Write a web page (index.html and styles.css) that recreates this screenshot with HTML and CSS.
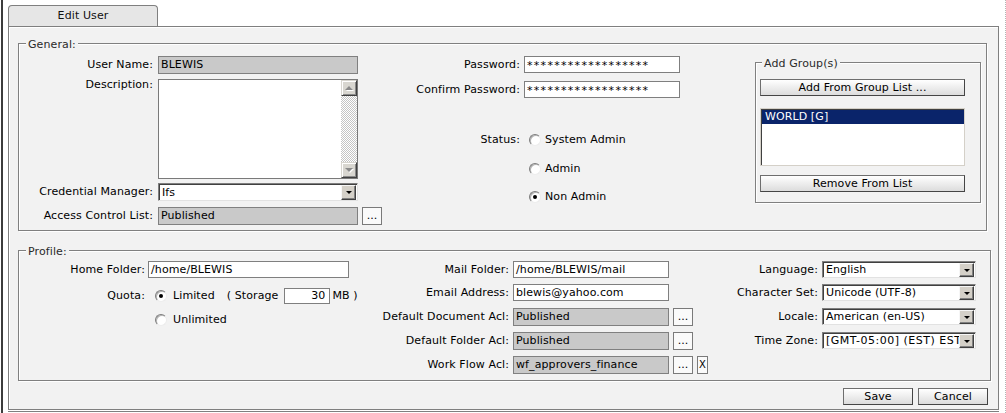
FILE: index.html
```html
<!DOCTYPE html>
<html lang="en">
<head>
<meta charset="utf-8">
<title>Edit User</title>
<link rel="stylesheet" href="styles.css">
</head>
<body>
<div class="frame">
  <div class="tab">Edit User</div>
  <div class="panel">
    <div class="group general">
      <span class="legend">General:</span>
      <div class="col gen-left">
        <div class="row h18 mt12"><span class="lbl">User Name:</span><div class="field ro w200">BLEWIS</div></div>
        <div class="row top mt5"><span class="lbl lbl-top">Description:</span>
          <div class="textarea">
            <div class="ta-body"></div>
            <div class="vscroll"><span class="sbtn"><i class="tri-up"></i></span><span class="track"></span><span class="sbtn"><i class="tri-down"></i></span></div>
          </div>
        </div>
        <div class="row h18 mt4"><span class="lbl">Credential Manager:</span><div class="select w200 sel18"><span class="sel-text">Ifs</span><span class="drop"><i></i></span></div></div>
        <div class="row h18 mt6"><span class="lbl">Access Control List:</span><div class="field ro w200">Published</div><button type="button" class="dots">...</button></div>
      </div>
      <div class="col gen-mid">
        <div class="row h17 mt12"><span class="lbl">Password:</span><div class="field w156 pw">******************</div></div>
        <div class="row h17 mt8"><span class="lbl">Confirm Password:</span><div class="field w156 pw">******************</div></div>
        <div class="row h17 mt33"><span class="lbl">Status:</span><span class="radio st-radio"></span><span class="opt">System Admin</span></div>
        <div class="row h17 mt12"><span class="lbl"></span><span class="radio st-radio"></span><span class="opt">Admin</span></div>
        <div class="row h17 mt11"><span class="lbl"></span><span class="radio on st-radio"></span><span class="opt">Non Admin</span></div>
      </div>
      <div class="group addgroup">
        <span class="legend lg-add">Add Group(s)</span>
        <button type="button" class="btn btn-wide">Add From Group List ...</button>
        <div class="listbox"><div class="list-item sel">WORLD [G]</div></div>
        <button type="button" class="btn btn-wide remove">Remove From List</button>
      </div>
    </div>

    <div class="group profile">
      <span class="legend">Profile:</span>
      <div class="col pro-left">
        <div class="row h17 mt10"><span class="lbl">Home Folder:</span><div class="field w201">/home/BLEWIS</div></div>
        <div class="row h17 mt9"><span class="lbl">Quota:</span><span class="radio on q-radio"></span><span class="q-opt">Limited</span><span class="q-storage">( Storage</span><div class="field num">30</div><span class="q-mb">MB )</span></div>
        <div class="row h17 mt7"><span class="lbl"></span><span class="radio q-radio"></span><span class="q-opt">Unlimited</span></div>
      </div>
      <div class="col pro-mid">
        <div class="row h17 mt10"><span class="lbl">Mail Folder:</span><div class="field w156">/home/BLEWIS/mail</div></div>
        <div class="row h17 mt6"><span class="lbl">Email Address:</span><div class="field w156">blewis@yahoo.com</div></div>
        <div class="row h18 mt7"><span class="lbl">Default Document Acl:</span><div class="field ro w156">Published</div><button type="button" class="dots">...</button></div>
        <div class="row h18 mt6"><span class="lbl">Default Folder Acl:</span><div class="field ro w156">Published</div><button type="button" class="dots">...</button></div>
        <div class="row h18 mt6"><span class="lbl">Work Flow Acl:</span><div class="field ro w156">wf_approvers_finance</div><button type="button" class="dots">...</button><button type="button" class="xbtn">X</button></div>
      </div>
      <div class="col pro-right">
        <div class="row h17 mt10"><span class="lbl">Language:</span><div class="select w154"><span class="sel-text">English</span><span class="drop"><i></i></span></div></div>
        <div class="row h17 mt6"><span class="lbl">Character Set:</span><div class="select w154"><span class="sel-text">Unicode (UTF-8)</span><span class="drop"><i></i></span></div></div>
        <div class="row h17 mt7"><span class="lbl">Locale:</span><div class="select w154"><span class="sel-text">American (en-US)</span><span class="drop"><i></i></span></div></div>
        <div class="row h17 mt7"><span class="lbl">Time Zone:</span><div class="select w154"><span class="sel-text tz">[GMT-05:00] (EST) EST</span><span class="drop"><i></i></span></div></div>
      </div>
    </div>

    <div class="actions">
      <button type="button" class="btn act">Save</button>
      <button type="button" class="btn act">Cancel</button>
    </div>
  </div>
  <div class="panel-foot"></div>
</div>
</body>
</html>
```

FILE: styles.css
```css
* { box-sizing: border-box; }
html, body { margin: 0; padding: 0; background: #fff; }
body {
  font-family: "DejaVu Sans", Verdana, sans-serif;
  font-size: 11px;
  letter-spacing: 0.1px;
  color: #000;
  width: 1006px;
  height: 413px;
  overflow: hidden;
}
button { font-family: "DejaVu Sans", Verdana, sans-serif; font-size: 11px; letter-spacing: 0.1px; color: #000; margin: 0; }

.frame {
  margin-left: 1px;
  width: 1005px;
  height: 413px;
  border-left: 2px solid #3c3c3c;
  border-right: 1px dotted #b4b4b4;
  padding: 5px 0 0 5px;
}

.tab {
  width: 150px;
  height: 21px;
  border: 1px solid #7f7f7f;
  border-bottom: 0;
  border-radius: 4px 4px 0 0;
  background: #e6e6e6;
  text-align: center;
  line-height: 20px;
  color: #111;
}

.panel {
  width: 991px;
  height: 384px;
  border: 1px solid #7f7f7f;
  background: #f2f2f2;
  box-shadow: inset 1px 1px 0 #fff;
  padding: 16px 0 0 9px;
}
.panel-foot { width: 991px; margin-top: 1px; border-top: 1px solid #7f7f7f; }

.group {
  position: relative;
  border: 1px solid #808080;
  box-shadow: inset 1px 1px 0 #fff, 1px 1px 0 #fff;
}
.legend {
  position: absolute;
  top: -6px;
  left: 7px;
  padding: 0 2px;
  background: #f2f2f2;
  line-height: 13px;
  color: #2a2a2a;
  white-space: nowrap;
}
.lg-add { left: 6px; }

.general { display: flex; width: 969px; height: 188px; }
.profile { display: flex; width: 973px; height: 131px; margin-top: 19px; }

.col { display: flex; flex-direction: column; flex: none; }
.gen-left { width: 364px; }
.gen-mid { width: 297px; }
.pro-left { width: 351px; }
.pro-mid { width: 342px; }
.pro-right { width: 260px; }

.row { display: flex; align-items: center; flex: none; }
.row.top { align-items: flex-start; }
.h17 { height: 17px; line-height: 17px; }
.h18 { height: 18px; line-height: 18px; }
.mt4 { margin-top: 4px; }
.mt5 { margin-top: 5px; }
.mt6 { margin-top: 6px; }
.mt7 { margin-top: 7px; }
.mt8 { margin-top: 8px; }
.mt9 { margin-top: 9px; }
.mt10 { margin-top: 10px; }
.mt11 { margin-top: 11px; }
.mt12 { margin-top: 12px; }
.mt33 { margin-top: 33px; }

.lbl { flex: none; text-align: right; white-space: nowrap; }
.lbl-top { line-height: 12px; }
.gen-left .lbl { width: 134px; margin-right: 5px; }
.gen-mid .lbl { width: 137px; margin-right: 4px; }
.pro-left .lbl { width: 126px; margin-right: 3px; }
.pro-mid .lbl { width: 139px; margin-right: 4px; }
.pro-right .lbl { width: 106px; margin-right: 4px; }

.field {
  flex: none;
  height: 17px;
  border: 1px solid #7f7f7f;
  background: #fff;
  padding: 0 2px;
  line-height: 15px;
  white-space: nowrap;
  overflow: hidden;
}
.field.ro { height: 18px; line-height: 16px; background: #c9c9c9; border-color: #808080; }
.w200 { width: 200px; }
.w201 { width: 201px; }
.w156 { width: 156px; }
.w154 { width: 154px; }
.pw { letter-spacing: 1.3px; line-height: 17px; }

.textarea {
  display: flex;
  flex: none;
  width: 200px;
  height: 100px;
  border: 1px solid #7a7a7a;
  background: #fff;
}
.ta-body { flex: 1; }
.vscroll { width: 16px; display: flex; flex-direction: column; }
.sbtn {
  flex: none;
  height: 16px;
  background: #d8d6d0;
  border: 1px solid;
  border-color: #d8d6d0 #404040 #404040 #d8d6d0;
  box-shadow: inset 1px 1px 0 #fff, inset -1px -1px 0 #8a8a8a;
  display: flex;
  align-items: center;
  justify-content: center;
}
.track {
  flex: 1;
  background: repeating-conic-gradient(#c4c4c4 0 25%, #fff 0 50%) 0 0 / 2px 2px;
}
.tri-up, .tri-down {
  width: 0; height: 0;
  border-left: 4px solid transparent;
  border-right: 4px solid transparent;
  filter: drop-shadow(1px 1px 0 #fff);
}
.tri-up { border-bottom: 4px solid #8a8a8a; }
.tri-down { border-top: 4px solid #8a8a8a; }

.select {
  flex: none;
  display: flex;
  height: 17px;
  border: 1px solid;
  border-color: #7f7f7f #e2e2e2 #e2e2e2 #7f7f7f;
  box-shadow: inset 1px 1px 0 #404040;
  background: #fff;
  padding: 1px 1px 0 1px;
}
.select.sel18 { height: 18px; }
.sel-text { flex: 1; min-width: 0; overflow: hidden; white-space: nowrap; padding-left: 2px; line-height: 14px; }
.sel18 .sel-text { line-height: 15px; }
.tz { letter-spacing: 0.5px; }
.drop {
  flex: none;
  width: 15px;
  background: #d4d0c8;
  border: 1px solid;
  border-color: #f6f6f6 #404040 #404040 #f6f6f6;
  box-shadow: inset -1px -1px 0 #808080;
  display: flex;
  align-items: center;
  justify-content: center;
}
.drop i {
  width: 0; height: 0;
  border-left: 3px solid transparent;
  border-right: 3px solid transparent;
  border-top: 3px solid #000;
}

.dots {
  flex: none;
  width: 20px;
  height: 18px;
  margin-left: 4px;
  padding: 0;
  border: 1px solid #7a7a7a;
  background: #fafafa;
  line-height: 16px;
  text-align: center;
  letter-spacing: 0;
}
.xbtn {
  flex: none;
  width: 11px;
  height: 18px;
  margin-left: 4px;
  padding: 0;
  border: 1px solid #7a7a7a;
  background: #fafafa;
  font-size: 10px;
  line-height: 16px;
  text-align: center;
  letter-spacing: 0;
}

.radio {
  flex: none;
  position: relative;
  width: 12px;
  height: 12px;
  border-radius: 50%;
  border: 1px solid;
  border-color: #7c7c7c #ececec #ececec #7c7c7c;
  background: #fff;
  box-shadow: inset 1px 1px 0 #b4b4b4;
}
.radio.on::after {
  content: "";
  position: absolute;
  left: 3px; top: 3px;
  width: 4px; height: 4px;
  border-radius: 50%;
  background: #000;
}
.st-radio { margin-left: 5px; }
.opt { margin-left: 4px; white-space: nowrap; }
.q-radio { margin-left: 7px; }
.q-opt { margin-left: 6px; white-space: nowrap; }
.q-storage { margin-left: 12px; white-space: nowrap; }
.num { width: 46px; height: 16px; margin-left: 6px; padding-right: 4px; text-align: right; line-height: 14px; }
.q-mb { margin-left: 2px; white-space: nowrap; }

.addgroup {
  flex: none;
  width: 226px;
  height: 141px;
  margin: 18px 0 0 75px;
  padding: 16px 0 0 4px;
}
.btn {
  display: block;
  height: 17px;
  padding: 0;
  border: 1px solid #6e6e6e;
  border-right-color: #454545;
  border-bottom-color: #454545;
  background: linear-gradient(#ffffff, #dcdcdc);
  line-height: 15px;
  text-align: center;
}
.btn-wide { width: 205px; }
.listbox {
  width: 205px;
  height: 58px;
  margin-top: 12px;
  background: #fff;
  border: 1px solid #d4d0c8;
  box-shadow: inset 1px 1px 0 #404040;
  padding: 1px 0 0 1px;
}
.list-item.sel {
  height: 14px;
  line-height: 14px;
  background: #0a246a;
  color: #fff;
  padding-left: 3px;
}
.remove { margin-top: 9px; }

.actions {
  display: flex;
  justify-content: flex-end;
  gap: 5px;
  margin-top: 7px;
  padding-right: 10px;
}
.act { width: 70px; }
```
